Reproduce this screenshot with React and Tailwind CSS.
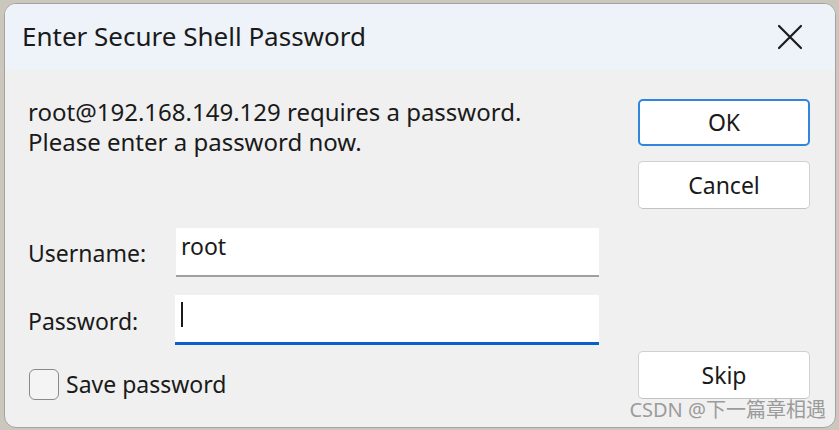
import React from "react";

const font = { fontFamily: '"Noto Sans", "Noto Sans CJK SC", sans-serif' };

function CloseIcon() {
  return (
    <svg width="26" height="26" viewBox="0 0 26 26" fill="none">
      <path d="M2 2 L24 24 M24 2 L2 24" stroke="#1b1b1b" strokeWidth="2.2" strokeLinecap="round" />
    </svg>
  );
}

function Button({ children, primary }) {
  return (
    <button
      className={
        primary
          ? "w-[172px] h-[47px] rounded-[5px] bg-white border-2 border-[#2f86dc] text-[23px] text-[#1a1a1a] flex items-center justify-center"
          : "w-[172px] h-[48px] rounded-[5px] bg-white border border-[#d0d0d0] border-b-[#c2c2c2] text-[23px] text-[#1a1a1a] flex items-center justify-center"
      }
    >
      {children}
    </button>
  );
}

export default function App() {
  return (
    <div className="w-[839px] h-[430px] bg-[#cbc7bc] pt-[3px] pl-[4px]" style={font}>
      <div className="relative w-[832px] h-[425px] rounded-[12px] border border-[#a3a3a3] overflow-hidden flex flex-col bg-[#f0f0f0]">
        <div className="h-[66px] bg-[#eef2f9] flex items-center justify-between pl-[17px] pr-[32px] shrink-0">
          <div className="text-[26px] text-[#1a1a1a] leading-none -mt-[2px]">Enter Secure Shell Password</div>
          <CloseIcon />
        </div>

        <div className="flex flex-1">
          <div className="flex-1 pl-[23px] pr-[39px]">
            <div className="mt-[27px] text-[24px] leading-[30px] text-[#1a1a1a]">
              <div>root@192.168.149.129 requires a password.</div>
              <div>Please enter a password now.</div>
            </div>

            <div className="mt-[71px] flex items-center">
              <div className="w-[148px] text-[23px] text-[#1a1a1a] pt-[2px]">Username:</div>
              <div className="flex-1 h-[49px] bg-white border-b-2 border-[#a0a0a0] pl-[5px] text-[23px] text-[#1a1a1a] leading-[36px]">
                root
              </div>
            </div>

            <div className="mt-[18px] flex items-center">
              <div className="w-[147px] text-[23px] text-[#1a1a1a] pt-[2px]">Password:</div>
              <div className="flex-1 h-[50px] bg-white border-b-[3px] border-[#0a5fc8] pl-[6px] pt-[7px]">
                <div className="w-[2px] h-[25px] bg-[#1a1a1a]"></div>
              </div>
            </div>

            <div className="mt-[22px] flex items-center">
              <div className="w-[30px] h-[31px] rounded-[6px] border-[1.5px] border-[#8a8a8a] bg-[#f4f4f4] ml-[1px]"></div>
              <div className="ml-[7px] text-[23px] text-[#1a1a1a]">Save password</div>
            </div>
          </div>

          <div className="w-[172px] mr-[25px] pt-[29px] flex flex-col">
            <Button primary>OK</Button>
            <div className="h-[15px]"></div>
            <Button>Cancel</Button>
            <div className="mt-auto mb-[28px]">
              <Button>Skip</Button>
            </div>
          </div>
        </div>

        <div className="absolute right-[9px] bottom-[7px] text-[20px] text-[#9b9b9b] leading-none">
          CSDN @下一篇章相遇
        </div>
      </div>
    </div>
  );
}
